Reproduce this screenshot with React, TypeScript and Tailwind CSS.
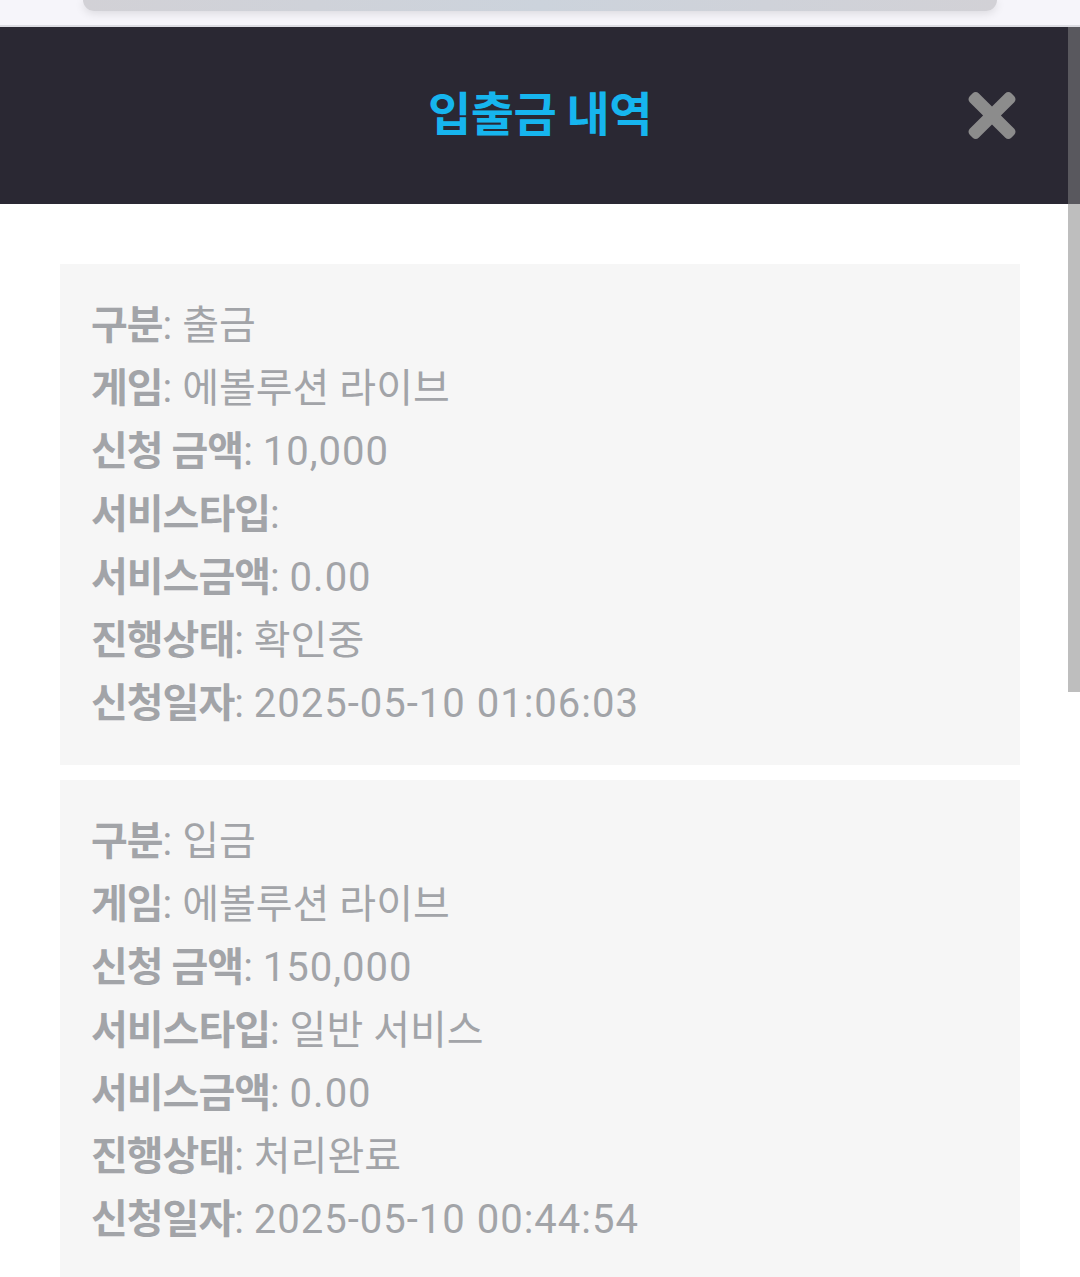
import React from "react";

type Row = { label: string; value: string; num?: boolean };

const cards: Row[][] = [
  [
    { label: "구분", value: "출금" },
    { label: "게임", value: "에볼루션 라이브" },
    { label: "신청 금액", value: "10,000", num: true },
    { label: "서비스타입", value: "" },
    { label: "서비스금액", value: "0.00", num: true },
    { label: "진행상태", value: "확인중" },
    { label: "신청일자", value: "2025-05-10 01:06:03", num: true },
  ],
  [
    { label: "구분", value: "입금" },
    { label: "게임", value: "에볼루션 라이브" },
    { label: "신청 금액", value: "150,000", num: true },
    { label: "서비스타입", value: "일반 서비스" },
    { label: "서비스금액", value: "0.00", num: true },
    { label: "진행상태", value: "처리완료" },
    { label: "신청일자", value: "2025-05-10 00:44:54", num: true },
  ],
];

function CloseIcon() {
  return (
    <svg viewBox="0 80 352 352" className="absolute right-[64px] top-[65px] w-[48px] h-[47px]" fill="#8c8c8c">
      <path d="M242.72 256l100.07-100.07c12.28-12.28 12.28-32.19 0-44.48l-22.24-22.24c-12.28-12.28-32.19-12.28-44.48 0L176 189.28 75.93 89.21c-12.28-12.28-32.19-12.28-44.48 0L9.21 111.45c-12.28 12.28-12.28 32.19 0 44.48L109.280 256 9.21 356.07c-12.28 12.28-12.28 32.19 0 44.48l22.24 22.24c12.28 12.28 32.2 12.280 44.48 0L176 322.72l100.07 100.07c12.28 12.28 32.2 12.28 44.48 0l22.24-22.24c12.28-12.28 12.28-32.19 0-44.48L242.72 256z" />
    </svg>
  );
}

export default function App() {
  return (
    <div
      className="relative w-[1080px] h-[1277px] overflow-hidden bg-white"
      style={{ fontFamily: "Roboto, 'Noto Sans CJK KR', sans-serif" }}
    >
      {/* top strip */}
      <div className="h-[25px] bg-[#f6f5fa] px-[83px] flex">
        <div className="w-full h-[11px] rounded-b-[22px] bg-gradient-to-r from-[#d2d1d6] via-[#ccd3dc] to-[#d2d1d6] shadow-[0_2px_10px_rgba(0,0,0,0.12)]" />
      </div>
      <div className="h-[2px] bg-[#dcdce2]" />

      {/* header */}
      <div className="h-[177px] bg-[#2a2833] flex items-center justify-center relative">
        <h1
          className="text-[#16b5ee] text-[47px] font-bold leading-none tracking-[-0.5px] mb-[10px]"
          style={{ fontFamily: "'Noto Sans CJK KR', sans-serif" }}
        >
          입출금 내역
        </h1>
        <CloseIcon />
      </div>

      {/* content */}
      <div className="px-[60px] pt-[60px] flex flex-col gap-[15px]">
        {cards.map((rows, i) => (
          <div key={i} className="bg-[#f6f6f6] px-[31px] pt-[30px] pb-[30px]">
            {rows.map((r) => (
              <div key={r.label} className="text-[40px] leading-[63px] text-[#a2a4a8] whitespace-nowrap">
                <span className="font-bold tracking-[-1px]">{r.label}</span>
                <span>: </span>
                <span className={r.num ? "tracking-[1px]" : ""}>{r.value}</span>
              </div>
            ))}
          </div>
        ))}
      </div>

      {/* scrollbar */}
      <div className="absolute right-0 top-[27px] w-[12px] h-[665px] bg-[rgba(133,133,133,0.53)]" />
    </div>
  );
}
